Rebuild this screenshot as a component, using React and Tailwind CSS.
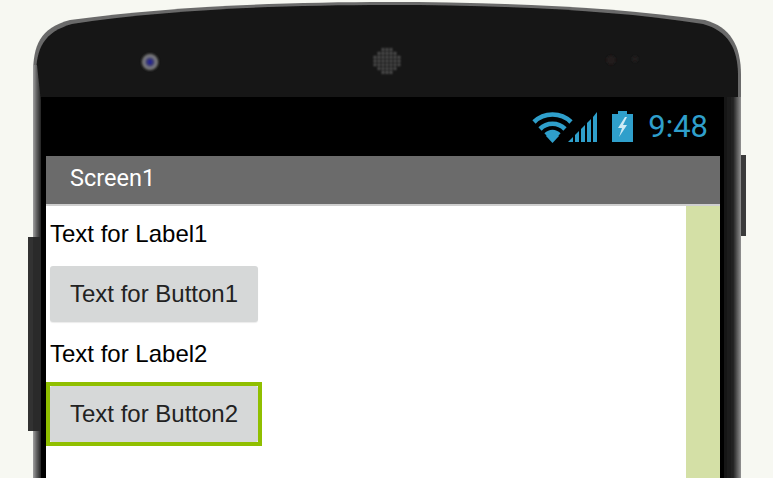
import React from "react";

function Bezel() {
  const dots = [];
  const rows = [3, 5, 7, 7, 7, 5, 3];
  rows.forEach((n, idx) => {
    for (let i = 0; i < n; i++) {
      dots.push(<circle key={idx + "-" + i} cx={387 + (i - (n - 1) / 2) * 4} cy={61 + (idx - 3) * 3.8} r="1.3" fill="#6e6e6e" />);
    }
  });
  return (
    <svg className="absolute inset-0" width="773" height="478" viewBox="0 0 773 478">
      <defs>
        <linearGradient id="lside" x1="0" x2="1" y1="0" y2="0">
          <stop offset="0" stopColor="#a0a0a0" />
          <stop offset="0.45" stopColor="#5a5a5a" />
          <stop offset="1" stopColor="#161616" />
        </linearGradient>
        <linearGradient id="rside" x1="0" x2="1" y1="0" y2="0">
          <stop offset="0" stopColor="#141414" />
          <stop offset="0.55" stopColor="#242424" />
          <stop offset="0.82" stopColor="#666666" />
          <stop offset="1" stopColor="#929292" />
        </linearGradient>
        <radialGradient id="cam">
          <stop offset="0" stopColor="#2222b0" />
          <stop offset="0.35" stopColor="#30306a" />
          <stop offset="0.7" stopColor="#8a8a8a" />
          <stop offset="1" stopColor="#1a1a1a" />
        </radialGradient>
        <filter id="soft"><feGaussianBlur stdDeviation="0.7" /></filter>
        <filter id="soft2"><feGaussianBlur stdDeviation="1" /></filter>
      </defs>
      <g filter="url(#soft)">
        <rect x="28" y="237" width="8" height="194" fill="#333333" />
        <rect x="738" y="155" width="8" height="81" fill="#3a3a3a" />
        <path
          d="M33 478 L33 75 C33 45 40 28 70 20 C170 6 290 2 387 2 C490 2 610 6 705 20 C730 27 741 45 741 75 L741 478 Z"
          fill="#6a6a6a"
        />
        <path
          d="M36 478 L36 76 C36 48 44 32 72 24 C170 9 290 5 387 5 C490 5 610 9 703 24 C728 31 738 48 738 76 L738 478 Z"
          fill="#151515"
        />
        <path d="M33 65 L37 65 L42 110 L42 237 L33 237 Z" fill="url(#lside)" />
        <rect x="33" y="431" width="9" height="47" fill="url(#lside)" />
        <rect x="33" y="237" width="9" height="194" fill="#2c2c2c" />
        <rect x="724" y="97" width="17" height="381" fill="url(#rside)" />
      </g>
      <g filter="url(#soft2)">
        <circle cx="150" cy="62" r="9" fill="url(#cam)" />
        {dots}
        <circle cx="611" cy="60" r="4.5" fill="#221e1e" />
        <circle cx="635" cy="59" r="3" fill="#221e1e" />
      </g>
    </svg>
  );
}

function StatusIcons() {
  return (
    <svg className="blur-[0.5px]" width="101" height="32" viewBox="533 109 101 32">
      <g fill="none" stroke="#2f9fcb" strokeWidth="4.6">
        <path d="M535 120 C545 110 562 110 572 120" />
        <path d="M541 127 C548 120 559 120 566 127" />
        <path d="M547 133 C551 129 556 129 560 133" />
      </g>
      <path d="M547 134 L553.5 129 L560 134 L553.5 141 Z" fill="#2f9fcb" />
      <g fill="#2f9fcb">
        <path d="M569 140 L574 135 L574 140 Z" />
        <path d="M576 133 L580 129 L580 140 L576 140 Z" />
        <path d="M582 127 L586 123 L586 140 L582 140 Z" />
        <path d="M588 121 L592 117 L592 140 L588 140 Z" />
        <path d="M594 115 L598 110 L598 140 L594 140 Z" />
        <path d="M619 109 H628 V112 H634 V140 H613 V112 H619 Z" />
      </g>
      <path d="M626 115 L619 126 L623 126 L620 135 L628 123 L624 123 L628 115 Z" fill="#cdeaf5" />
    </svg>
  );
}

export default function App() {
  return (
    <div className="relative h-[478px] w-[773px] overflow-hidden bg-[#f7f8f2] font-['Liberation_Sans',sans-serif]">
      <Bezel />
      <div className="relative ml-[41px] w-[683px] pt-[97px]">
        <div className="flex h-[59px] items-center justify-end gap-[15px] bg-black pr-[16px]">
          <StatusIcons />
          <span className="font-['Roboto',sans-serif] text-[31px] leading-none font-normal text-[#2f9fcb]">9:48</span>
        </div>
        <div className="border-r-[4px] border-l-[5px] border-black">
          <div className="flex h-[48px] items-center bg-[#6b6b6b] pb-[3px] pl-[24px] font-['Roboto',sans-serif] text-[23.5px] font-normal text-white">
            Screen1
          </div>
          <div className="h-[2px] bg-[#cfcfcf]" />
          <div className="flex h-[272px]">
            <div className="flex flex-1 flex-col items-start bg-white">
              <div className="flex h-[56px] items-center pl-[4px] text-[24px] text-black">Text for Label1</div>
              <div className="border-[4px] border-transparent">
                <div className="flex h-[56px] w-[208px] items-center justify-center rounded-[3px] bg-[#d6d8d8] text-[24px] text-[#222222] shadow-[0_1px_1px_rgba(0,0,0,0.08)]">
                  Text for Button1
                </div>
              </div>
              <div className="flex h-[56px] items-center pl-[4px] text-[24px] text-black">Text for Label2</div>
              <div className="border-[4px] border-[#90bf00]">
                <div className="flex h-[56px] w-[208px] items-center justify-center rounded-[2px] bg-[#d6d8d8] text-[24px] text-[#222222]">
                  Text for Button2
                </div>
              </div>
            </div>
            <div className="w-[34px] bg-[#d4e0a6]" />
          </div>
        </div>
      </div>
    </div>
  );
}
